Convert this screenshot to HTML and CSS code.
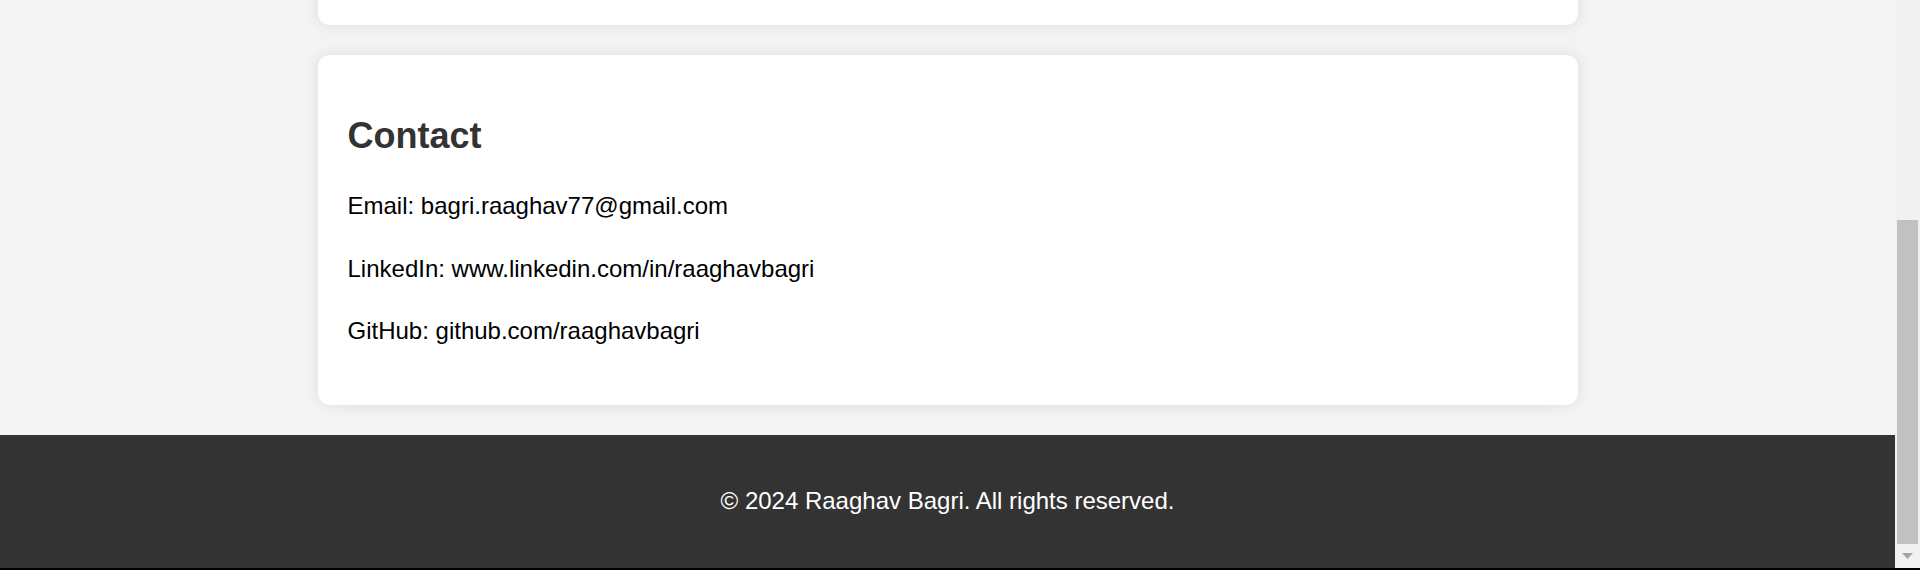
FILE: index.html
```html
<!DOCTYPE html>
<html lang="en">
<head>
<meta charset="utf-8">
<title>Raaghav Bagri</title>
<link rel="stylesheet" href="styles.css">
</head>
<body>
<div class="window">
  <div class="viewport">
    <div class="page">
      <main class="container">
        <section class="card card-prev"></section>
        <section class="card">
          <h2>Contact</h2>
          <p>Email: bagri.raaghav77@gmail.com</p>
          <p>LinkedIn: www.linkedin.com/in/raaghavbagri</p>
          <p>GitHub: github.com/raaghavbagri</p>
        </section>
      </main>
      <footer class="site-footer">
        <p>&copy; 2024 Raaghav Bagri. All rights reserved.</p>
      </footer>
    </div>
    <div class="scrollbar">
      <div class="thumb"></div>
      <div class="arrow">
        <svg width="11" height="6" viewBox="0 0 11 6"><path d="M0 0 H11 L5.5 6 Z" fill="#a3a3a3"/></svg>
      </div>
    </div>
  </div>
  <div class="frame-bottom"></div>
</div>
</body>
</html>
```

FILE: styles.css
```css
* {
  box-sizing: border-box;
}

html,
body {
  margin: 0;
  padding: 0;
}

body {
  font-family: "Liberation Sans", Arial, sans-serif;
  background: #f4f4f4;
  color: #000;
}

.window {
  height: 570px;
  display: flex;
  flex-direction: column;
  overflow: hidden;
}

.viewport {
  flex: 1;
  min-height: 0;
  display: flex;
}

.page {
  flex: 1;
  min-width: 0;
  overflow: hidden;
  display: flex;
  flex-direction: column;
  justify-content: flex-end;
  background: #f4f4f4;
}

.container {
  flex-shrink: 0;
  width: 1260px;
  margin: 0 auto;
  padding-bottom: 30px;
  display: flex;
  flex-direction: column;
  gap: 30px;
}

.card {
  flex-shrink: 0;
  background: #fff;
  border-radius: 12px;
  box-shadow: 0 0 15px rgba(0, 0, 0, 0.1);
  padding: 30px;
}

.card-prev {
  min-height: 300px;
}

.card h2 {
  font-size: 36px;
  line-height: normal;
  margin: 30px 0;
  color: #333;
}

.card p {
  font-size: 24px;
  line-height: 1.6;
  margin: 24px 0;
}

.site-footer {
  flex-shrink: 0;
  background: #333;
  color: #fff;
  text-align: center;
  padding: 23px 0 24px;
}

.site-footer p {
  font-size: 24px;
  line-height: 1.6;
  margin: 24px 0;
}

.scrollbar {
  width: 25px;
  flex-shrink: 0;
  background: #f1f1f1;
  display: flex;
  flex-direction: column;
  padding-top: 220px;
}

.thumb {
  height: 324px;
  margin: 0 2px;
  background: #c1c1c1;
}

.arrow {
  flex: 1;
  display: flex;
  align-items: center;
  justify-content: center;
}

.arrow svg {
  display: block;
}

.frame-bottom {
  height: 2px;
  background: #000;
}
```
